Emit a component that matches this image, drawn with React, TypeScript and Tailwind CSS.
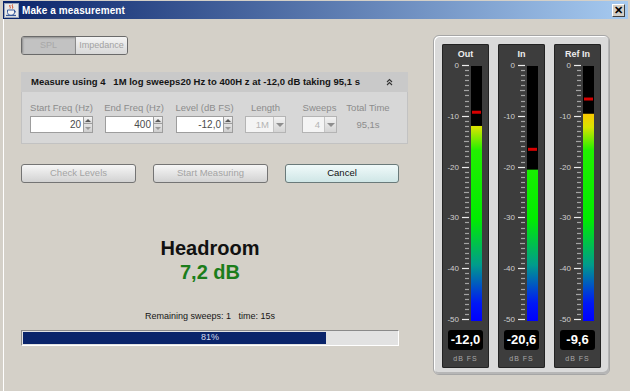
import React from 'react';

// meter scale: 0 dB at y=5, 5.08 px per dB (svg coords)
const Y0 = 5;
const PX = 5.08;
const dbY = (db: number) => Y0 - db * PX;

interface MeterProps {
  id: string;
  title: string;
  level: number;
  peak: number;
  value: string;
}

const Meter: React.FC<MeterProps> = ({ id, title, level, peak, value }) => {
  const ticks = Array.from({ length: 51 }, (_, i) => i);
  const labels = [0, 10, 20, 30, 40, 50];
  return (
    <div className="flex h-[324px] w-[47px] flex-col items-center rounded-[2px] bg-[#3d3d3d] shadow-[inset_0_0_0_1px_#232323]">
      <div className="h-[16px] pt-[5px] text-[9px] font-bold leading-[11px] text-[#ededed]">{title}</div>
      <svg width="47" height="264" className="block">
        <defs>
          <linearGradient id={`grad-${id}`} x1="0" y1="6" x2="0" y2="261" gradientUnits="userSpaceOnUse">
            <stop offset="0" stopColor="#ff6a00" />
            <stop offset="0.18" stopColor="#ffc400" />
            <stop offset="0.24" stopColor="#d8e400" />
            <stop offset="0.33" stopColor="#22f000" />
            <stop offset="0.6" stopColor="#00ec00" />
            <stop offset="0.78" stopColor="#009c8c" />
            <stop offset="0.93" stopColor="#0018f4" />
            <stop offset="1" stopColor="#0000ff" />
          </linearGradient>
        </defs>
        {ticks.map((i) => {
          const y = Math.round(dbY(-i)) + 0.5;
          const major = i % 10 === 0;
          const mid = i % 5 === 0;
          return (
            <line
              key={i}
              x1={major ? 20 : mid ? 22 : 23}
              x2={27}
              y1={y}
              y2={y}
              stroke={major ? '#ececec' : '#a4a4a4'}
              strokeWidth={1.2}
            />
          );
        })}
        {labels.map((d) => (
          <text
            key={d}
            x={17}
            y={dbY(-d) + 3}
            textAnchor="end"
            fontSize="8"
            fill="#cfcfcf"
            fontFamily="Liberation Sans, Arial, sans-serif"
          >
            {d === 0 ? '0' : `-${d}`}
          </text>
        ))}
        <rect x="29" y="6" width="11" height="255" fill={`url(#grad-${id})`} />
        <rect x="29" y="6" width="11" height={dbY(level) - 6} fill="#000000" />
        <rect x="30" y={dbY(peak) - 1} width="9" height="3" fill="#d80000" />
      </svg>
      <div className="mt-[6px] flex h-[20px] w-[35px] items-center justify-center rounded-[3px] bg-black text-[13px] font-bold text-white">
        {value}
      </div>
      <div className="mt-[4px] text-[7px] leading-[10px] tracking-[1px] text-[#a8a8a8]">dB FS</div>
    </div>
  );
};

const Spinner: React.FC<{ value: string; width: number }> = ({ value, width }) => (
  <div className="flex h-[17px]" style={{ width }}>
    <div className="flex-1 border border-[#9d9d9d] bg-white pr-[2px] text-right text-[10px] leading-[15px] text-[#4c4c4c]">
      {value}
    </div>
    <div className="flex w-[9px] flex-col">
      <div className="flex h-[8px] items-center justify-center border border-l-0 border-[#9d9d9d] bg-[linear-gradient(#f6f6f6,#d6d6d6)]">
        <div className="h-0 w-0 border-x-[3px] border-b-[3px] border-x-transparent border-b-[#5a5a5a]" />
      </div>
      <div className="flex h-[9px] items-center justify-center border border-l-0 border-t-0 border-[#9d9d9d] bg-[linear-gradient(#e4e4e4,#cfcfcf)]">
        <div className="h-0 w-0 border-x-[3px] border-t-[3px] border-x-transparent border-t-[#9a9a9a]" />
      </div>
    </div>
  </div>
);

const Combo: React.FC<{ value: string; width: number }> = ({ value, width }) => (
  <div className="flex h-[17px] border border-[#b4b4b4]" style={{ width }}>
    <div className="flex-1 bg-[#f4f4f4] pr-[4px] text-right text-[9.5px] leading-[15px] text-[#b4b4b4]">{value}</div>
    <div className="flex w-[12px] items-center justify-center border-l border-[#c4c4c4] bg-[linear-gradient(#f2f2f2,#d4d4d4)]">
      <div className="h-0 w-0 border-x-[4px] border-t-[4px] border-x-transparent border-t-[#8e8e8e]" />
    </div>
  </div>
);

const Field: React.FC<{ label: string; width: number; ml: string; children: React.ReactNode }> = ({
  label,
  width,
  ml,
  children,
}) => (
  <div className={`flex flex-col items-center ${ml}`} style={{ width }}>
    <div className="h-[12px] whitespace-nowrap text-[9.5px] leading-[12px] text-[#8c8c8c]">{label}</div>
    <div className="mt-[2px]">{children}</div>
  </div>
);

export default function App() {
  return (
    <div className="h-[391px] w-[630px] overflow-hidden bg-[#d4d0c8] pl-[3px] pr-[2px] pt-[1px] font-['Liberation_Sans',Arial,sans-serif]">
      {/* title bar */}
      <div className="flex h-[18px] items-center bg-[linear-gradient(to_right,#0a246a,#a6caf0)] pl-[1px] pr-[3px]">
        <svg width="15" height="15" viewBox="0 0 15 15" className="shrink-0">
          <rect x="0.5" y="0.5" width="14" height="14" fill="#e8e8e8" stroke="#9aa4b8" />
          <path d="M6 2 C5 3.5 7 4 6 5.5 M8.5 1.5 C7.5 3 9.5 3.5 8.5 5.5" stroke="#d03a10" strokeWidth="1" fill="none" />
          <path d="M3.5 7 h7 v2.5 a3 2.5 0 0 1 -7 0 z" fill="#f4f4f4" stroke="#3a5a9a" strokeWidth="1" />
          <path d="M10.5 7.5 a1.5 1.3 0 0 1 0 2.4" stroke="#3a5a9a" fill="none" />
          <path d="M2 12.5 h10" stroke="#3a5a9a" strokeWidth="1.2" />
        </svg>
        <span className="ml-[3px] text-[10px] font-bold tracking-[0.1px] text-white">Make a measurement</span>
        <div className="ml-auto flex h-[13px] w-[13px] items-center justify-center border border-b-[#404040] border-l-white border-r-[#404040] border-t-white bg-[#d4d0c8] text-[11px] font-bold leading-none text-black">
          ✕
        </div>
      </div>

      {/* body */}
      <div className="flex h-[372px] shadow-[inset_1px_0_0_#ffffff]">
        <div className="flex w-[417px] flex-col pl-[18px]">
          {/* SPL / Impedance toggle */}
          <div className="mt-[17px] flex h-[19px] w-[107px] overflow-hidden rounded-[3px] border border-[#6a6a6a] text-[9px]">
            <div className="flex w-[53px] items-center justify-center bg-[#c2c2c2] text-[#a8a8a8] shadow-[inset_1px_1px_2px_#8e8e8e]">
              SPL
            </div>
            <div className="flex flex-1 items-center justify-center border-l border-[#8a8a8a] bg-[linear-gradient(#f4f4f4,#d8d8d8)] text-[#a2a2a2]">
              Impedance
            </div>
          </div>

          {/* measure panel */}
          <div className="mt-[17px] w-[387px]">
            <div className="flex h-[20px] items-center justify-between bg-[#c9c9c9] pl-[10px] pr-[15px]">
              <span className="whitespace-pre text-[9.5px] font-bold text-[#141414]">
                {'Measure using 4   1M log sweeps20 Hz to 400H z at -12,0 dB taking 95,1 s'}
              </span>
              <svg width="7" height="8" viewBox="0 0 7 8">
                <path d="M1 4 L3.5 1.5 L6 4 M1 7 L3.5 4.5 L6 7" stroke="#333" strokeWidth="1.1" fill="none" />
              </svg>
            </div>
            <div className="flex h-[52px] border border-t-0 border-[#c2c2c2] bg-[#d7d7d7] pl-[8px] pt-[10px]">
              <Field label="Start Freq (Hz)" width={63} ml="">
                <Spinner value="20" width={63} />
              </Field>
              <Field label="End Freq (Hz)" width={58} ml="ml-[12px]">
                <Spinner value="400" width={58} />
              </Field>
              <Field label="Level (dB FS)" width={57} ml="ml-[13px]">
                <Spinner value="-12,0" width={57} />
              </Field>
              <Field label="Length" width={41} ml="ml-[12px]">
                <Combo value="1M" width={41} />
              </Field>
              <Field label="Sweeps" width={35} ml="ml-[16px]">
                <Combo value="4" width={35} />
              </Field>
              <Field label="Total Time" width={42} ml="ml-[10px]">
                <div className="h-[17px] text-[9.5px] leading-[17px] text-[#8c8c8c]">95,1s</div>
              </Field>
            </div>
          </div>

          {/* buttons */}
          <div className="mt-[20px] flex gap-[17px] text-[9.5px]">
            <button className="h-[19px] w-[115px] rounded-[3px] border border-[#747474] bg-[linear-gradient(#f6f6f6,#d2d2d2)] text-[#a4a4a4]">
              Check Levels
            </button>
            <button className="h-[19px] w-[115px] rounded-[3px] border border-[#747474] bg-[linear-gradient(#f6f6f6,#d2d2d2)] text-[#a4a4a4]">
              Start Measuring
            </button>
            <button className="h-[19px] w-[114px] rounded-[3px] border border-[#6a7a7a] bg-[linear-gradient(#f0fafa,#cfe6e6)] text-[#101010]">
              Cancel
            </button>
          </div>

          {/* headroom */}
          <div className="mt-[53px] w-[378px] text-center">
            <div className="text-[20px] font-bold leading-[24px] text-[#111111]">Headroom</div>
            <div className="text-[20px] font-bold leading-[24px] text-[#1b7d1b]">7,2 dB</div>
            <div className="mt-[26px] whitespace-pre text-[9px] leading-[12px] text-[#151515]">
              {'Remaining sweeps: 1   time: 15s'}
            </div>
          </div>

          {/* progress */}
          <div className="relative mt-[8px] h-[16px] w-[378px] border border-b-white border-l-[#8a8a8a] border-r-white border-t-[#8a8a8a] bg-[#e2e2e2] p-[1px]">
            <div className="h-full w-[81%] bg-[#0a246a]" />
            <div className="absolute inset-0 flex items-center justify-center text-[9px] text-[#d8dcec]">81%</div>
          </div>
        </div>

        {/* meters */}
        <div className="ml-[13px] mt-[16px] flex h-[340px] w-[177px] gap-[9px] rounded-[6px] border border-[#a6a6a6] bg-[#dadada] pb-[6px] pl-[8px] pr-[8px] pt-[8px] shadow-[inset_1px_1px_0_#ffffff,inset_-1px_-2px_0_#b6b6b6]">
          <Meter id="out" title="Out" level={-12} peak={-9.2} value="-12,0" />
          <Meter id="in" title="In" level={-20.6} peak={-16.5} value="-20,6" />
          <Meter id="ref" title="Ref In" level={-9.6} peak={-6.6} value="-9,6" />
        </div>
      </div>
    </div>
  );
}
